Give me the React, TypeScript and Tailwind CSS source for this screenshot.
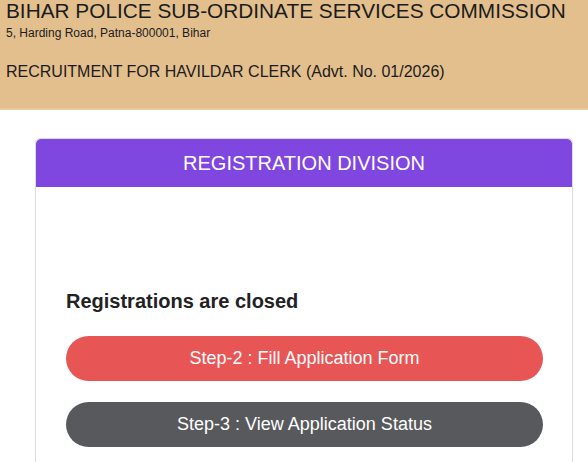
export default function App() {
  return (
    <div className="min-h-[462px] bg-white font-['Liberation_Sans',Arial,sans-serif] text-[#1b1b1b]">
      <header className="h-[110px] bg-[#e3bf8e] border-b-2 border-[#e8c9a0] px-[6px]">
        <h1 className="text-[20.8px] leading-[22px]">BIHAR POLICE SUB-ORDINATE SERVICES COMMISSION</h1>
        <p className="mt-[6px] text-[12px] leading-[11px]">5, Harding Road, Patna-800001, Bihar</p>
        <p className="mt-[25px] text-[16px] leading-[16px]">RECRUITMENT FOR HAVILDAR CLERK (Advt. No. 01/2026)</p>
      </header>

      <div className="ml-[35px] mt-[28px] w-[538px] rounded-[5px] border border-[#dcdcdc]">
        <div className="flex h-[48px] items-center justify-center rounded-t-[5px] bg-[#8046e0] text-[20px] text-white">
          REGISTRATION DIVISION
        </div>
        <div className="px-[30px] pt-[105px] pb-[20px]">
          <h2 className="text-[20px] leading-[19px] font-bold text-[#222]">Registrations are closed</h2>
          <button className="mt-[25px] flex h-[45px] w-[477px] items-center justify-center rounded-full bg-[#e85555] text-[18px] text-white">
            Step-2 : Fill Application Form
          </button>
          <button className="mt-[21px] flex h-[45px] w-[477px] items-center justify-center rounded-full bg-[#58595c] text-[18px] text-white">
            Step-3 : View Application Status
          </button>
        </div>
      </div>
    </div>
  );
}
